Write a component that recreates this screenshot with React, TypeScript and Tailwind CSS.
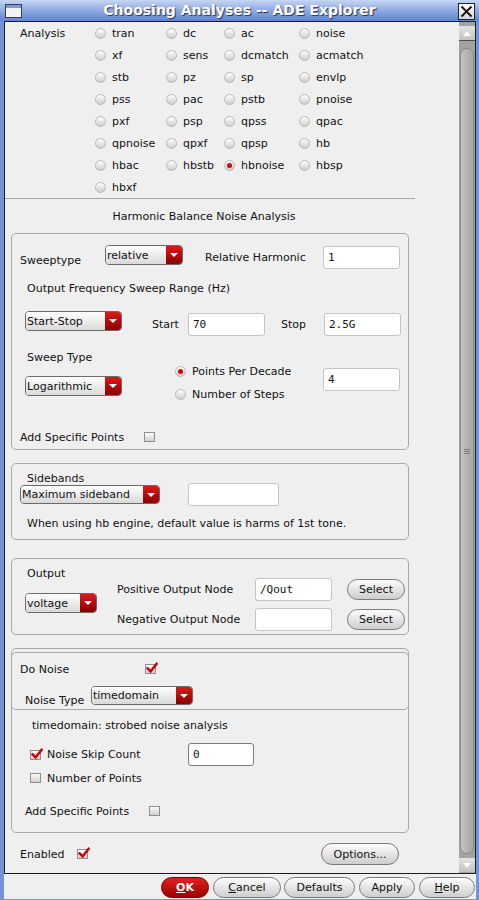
import React from 'react';

const ANALYSES: [string, boolean][] = [
  ['tran', false], ['dc', false], ['ac', false], ['noise', false],
  ['xf', false], ['sens', false], ['dcmatch', false], ['acmatch', false],
  ['stb', false], ['pz', false], ['sp', false], ['envlp', false],
  ['pss', false], ['pac', false], ['pstb', false], ['pnoise', false],
  ['pxf', false], ['psp', false], ['qpss', false], ['qpac', false],
  ['qpnoise', false], ['qpxf', false], ['qpsp', false], ['hb', false],
  ['hbac', false], ['hbstb', false], ['hbnoise', true], ['hbsp', false],
  ['hbxf', false],
];

function Radio({ on = false }: { on?: boolean }) {
  return (
    <span className="flex h-[11px] w-[11px] shrink-0 items-center justify-center rounded-full border border-[#b8b8b8] bg-gradient-to-b from-white to-[#cdcdcd]">
      {on && <span className="h-[5px] w-[5px] rounded-full bg-[#d60000]" />}
    </span>
  );
}

function Check({ on = false }: { on?: boolean }) {
  return (
    <span className="relative block h-[10px] w-[11px] shrink-0 border border-[#8e8e8e] bg-gradient-to-b from-[#fbfbfb] to-[#d0d0d0]">
      {on && (
        <svg className="absolute -top-[3px] left-0" width="12" height="12" viewBox="0 0 12 12">
          <path d="M1.6 6.4 L4.6 9.4 L10.6 1.8" stroke="#d00000" strokeWidth="2.4" fill="none" strokeLinecap="square" />
        </svg>
      )}
    </span>
  );
}

function Combo({ text, className }: { text: string; className: string }) {
  return (
    <div className={`flex shrink-0 overflow-hidden rounded-[4px] border border-[#6a6a6a] ${className}`}>
      <div className="flex flex-1 items-center bg-gradient-to-b from-white to-[#d9d9d9] pl-[1px] leading-[13px]">
        {text}
      </div>
      <div className="flex w-[16px] items-center justify-center bg-gradient-to-b from-[#dc1a1a] to-[#8c0000]">
        <span className="h-0 w-0 border-x-[4px] border-t-[4px] border-x-transparent border-t-white" />
      </div>
    </div>
  );
}

function Field({ value = '', className }: { value?: string; className: string }) {
  return (
    <div
      className={`flex shrink-0 items-center rounded-[3px] border bg-white pl-[4px] font-['DejaVu_Sans_Mono',monospace] text-[11px] ${className}`}
    >
      {value}
    </div>
  );
}

function Button({ children, className }: { children: React.ReactNode; className: string }) {
  return (
    <div
      className={`flex shrink-0 items-center justify-center rounded-full border border-[#7a7a7a] bg-gradient-to-b from-[#fdfdfd] to-[#cdcdcd] ${className}`}
    >
      {children}
    </div>
  );
}

function TitleBar() {
  return (
    <div className="relative flex h-[21px] shrink-0 items-center justify-center bg-gradient-to-b from-[#c6d6f3] via-[#8eaae2] to-[#6284cb]">
      <svg className="absolute left-[5px] top-[4px]" width="17" height="14" viewBox="0 0 17 14">
        <rect x="0.5" y="0.5" width="16" height="13" fill="#f2f2f2" stroke="#3a3a4a" />
        <rect x="1" y="1" width="15" height="3" fill="#7d9ad6" />
      </svg>
      <span className="font-['DejaVu_Sans',sans-serif] text-[14px] font-bold leading-[17px] text-white [text-shadow:1px_1px_1px_#223355]">
        Choosing Analyses -- ADE Explorer
      </span>
      <div className="absolute right-[4px] top-[3px] flex h-[17px] w-[17px] items-center justify-center border border-[#222] bg-gradient-to-b from-white to-[#d4d4d4]">
        <svg width="13" height="13" viewBox="0 0 13 13">
          <path d="M1.5 1.5 L11.5 11.5 M11.5 1.5 L1.5 11.5" stroke="#111" strokeWidth="1.8" />
        </svg>
      </div>
    </div>
  );
}

function Scrollbar() {
  return (
    <div className="flex w-[16px] flex-col bg-[#a3a3a3]">
      <div className="h-[4px]" />
      <div className="flex h-[15px] items-center justify-center border-b border-[#505050] bg-gradient-to-b from-[#e2e2e2] to-[#c2c2c2]">
        <span className="h-0 w-0 border-x-[4px] border-b-[5px] border-x-transparent border-b-white" />
      </div>
      <div className="h-[7px]" />
      <div className="mx-[1px] flex flex-1 items-center justify-center rounded-[7px] border border-[#8a8a8a] bg-gradient-to-r from-[#c4c4c4] via-[#b4b4b4] to-[#a8a8a8]">
        <div className="flex flex-col gap-[1px]">
          <span className="h-px w-[6px] bg-[#7a7a7a]" />
          <span className="h-px w-[6px] bg-[#7a7a7a]" />
          <span className="h-px w-[6px] bg-[#7a7a7a]" />
        </div>
      </div>
      <div className="h-[4px]" />
      <div className="flex h-[14px] items-center justify-center bg-gradient-to-b from-[#e2e2e2] to-[#c2c2c2]">
        <span className="h-0 w-0 border-x-[4px] border-t-[5px] border-x-transparent border-t-white" />
      </div>
      <div className="h-[1px]" />
    </div>
  );
}

function Content() {
  return (
    <div className="flex w-[454px] flex-col">
      {/* analysis radios */}
      <div className="flex h-[176px]">
        <div className="flex h-[22px] w-[90px] items-center pl-[15px]">Analysis</div>
        <div className="grid grid-cols-[71px_58px_75px_80px] auto-rows-[22px]">
          {ANALYSES.map(([name, on]) => (
            <div key={name} className="flex items-center">
              <Radio on={on} />
              <span className="ml-[6px]">{name}</span>
            </div>
          ))}
        </div>
      </div>
      <div className="h-px w-[410px] bg-[#a6a6a6]" />
      <div className="flex h-[34px] w-[398px] items-center justify-center">Harmonic Balance Noise Analysis</div>

      {/* sweep box */}
      <div className="ml-[6px] flex h-[217px] w-[398px] flex-col rounded-[5px] border border-[#a8a8a8]">
        <div className="mt-[11px] flex h-[24px] items-start">
          <span className="mt-[9px] w-[93px] pl-[8px]">Sweeptype</span>
          <Combo text="relative" className="h-[20px] w-[78px]" />
          <span className="ml-[22px] mt-[6px] w-[118px]">Relative Harmonic</span>
          <Field value="1" className="mt-[1px] h-[23px] w-[77px] border-[#c4c4c4]" />
        </div>
        <div className="mt-[13px] pl-[15px]">Output Frequency Sweep Range (Hz)</div>
        <div className="mt-[15px] flex h-[26px] items-start pl-[13px]">
          <Combo text="Start-Stop" className="mt-[1px] h-[20px] w-[97px]" />
          <span className="ml-[30px] mt-[8px] w-[36px]">Start</span>
          <Field value="70" className="mt-[3px] h-[23px] w-[77px] border-[#c4c4c4]" />
          <span className="ml-[16px] mt-[8px] w-[43px]">Stop</span>
          <Field value="2.5G" className="mt-[3px] h-[23px] w-[77px] border-[#c4c4c4]" />
        </div>
        <div className="mt-[15px] flex h-[55px] items-start">
          <div className="flex w-[110px] flex-col pl-[13px]">
            <span className="pl-[2px]">Sweep Type</span>
            <Combo text="Logarithmic" className="mt-[12px] h-[20px] w-[97px]" />
          </div>
          <div className="ml-[53px] flex w-[148px] flex-col pt-[9px]">
            <div className="flex h-[23px] items-center">
              <Radio on />
              <span className="ml-[6px]">Points Per Decade</span>
            </div>
            <div className="flex h-[23px] items-center">
              <Radio />
              <span className="ml-[6px]">Number of Steps</span>
            </div>
          </div>
          <Field value="4" className="mt-[17px] h-[23px] w-[77px] border-[#c4c4c4]" />
        </div>
        <div className="mt-[24px] flex h-[14px] items-center pl-[8px]">
          <span className="w-[124px]">Add Specific Points</span>
          <Check />
        </div>
      </div>

      {/* sidebands box */}
      <div className="ml-[6px] mt-[13px] flex h-[77px] w-[398px] flex-col rounded-[5px] border border-[#a8a8a8]">
        <div className="mt-[8px] pl-[15px]">Sidebands</div>
        <div className="-mt-[2px] flex h-[23px] items-center pl-[8px]">
          <Combo text="Maximum sideband" className="h-[19px] w-[140px]" />
          <Field className="ml-[28px] h-[23px] w-[91px] border-[#c4c4c4]" />
        </div>
        <div className="mt-[11px] pl-[15px]">When using hb engine, default value is harms of 1st tone.</div>
      </div>

      {/* output box */}
      <div className="ml-[6px] mt-[18px] flex h-[77px] w-[398px] rounded-[5px] border border-[#a8a8a8]">
        <div className="flex w-[105px] flex-col pl-[13px]">
          <span className="mt-[8px] pl-[2px]">Output</span>
          <Combo text="voltage" className="mt-[13px] h-[20px] w-[72px]" />
        </div>
        <div className="flex flex-col pt-[19px]">
          <div className="flex h-[23px] items-center">
            <span className="w-[138px]">Positive Output Node</span>
            <Field value="/Qout" className="h-[23px] w-[77px] border-[#c4c4c4]" />
            <Button className="ml-[15px] h-[21px] w-[58px]">Select</Button>
          </div>
          <div className="mt-[7px] flex h-[23px] items-center">
            <span className="w-[138px]">Negative Output Node</span>
            <Field className="h-[23px] w-[77px] border-[#c4c4c4]" />
            <Button className="ml-[15px] h-[21px] w-[58px]">Select</Button>
          </div>
        </div>
      </div>

      {/* noise box */}
      <div className="ml-[6px] mt-[13px] flex h-[185px] w-[398px] flex-col rounded-[5px] border border-[#a8a8a8]">
        <div className="-mx-px mt-[3px] flex h-[58px] flex-col rounded-[5px] border border-[#a8a8a8]">
          <div className="mt-[9px] flex h-[14px] items-center pl-[8px]">
            <span className="w-[125px]">Do Noise</span>
            <Check on />
          </div>
          <div className="mt-[10px] flex h-[19px] items-start">
            <span className="mt-[8px] w-[79px] pl-[13px]">Noise Type</span>
            <Combo text="timedomain" className="h-[19px] w-[102px]" />
          </div>
        </div>
        <div className="mt-[9px] pl-[20px]">timedomain: strobed noise analysis</div>
        <div className="mt-[11px] flex h-[23px] items-center pl-[18px]">
          <Check on />
          <span className="ml-[6px] w-[141px]">Noise Skip Count</span>
          <Field value="0" className="h-[23px] w-[66px] border-[#7c7c7c]" />
        </div>
        <div className="mt-[5px] flex h-[14px] items-center pl-[18px]">
          <Check />
          <span className="ml-[6px]">Number of Points</span>
        </div>
        <div className="mt-[19px] flex h-[14px] items-center pl-[13px]">
          <span className="w-[124px]">Add Specific Points</span>
          <Check />
        </div>
      </div>

      <div className="mt-[10px] flex h-[22px] items-center pl-[15px]">
        <span className="w-[57px]">Enabled</span>
        <Check on />
        <Button className="ml-[233px] h-[22px] w-[78px]">Options...</Button>
      </div>
    </div>
  );
}

export default function App() {
  return (
    <div className="flex h-[900px] w-[479px] flex-col overflow-hidden bg-[#7393d2] font-['DejaVu_Sans',sans-serif] text-[11px] leading-[13px] text-[#111]">
      <TitleBar />
      <div className="ml-[4px] mr-[3px] flex h-[878px] flex-col bg-[#efefef]">
        <div className="flex h-[853px] border border-[#1e1e1e]">
          <Content />
          <Scrollbar />
        </div>
        <div className="flex h-[24px] items-start pt-[3px]">
          <div className="ml-[157px] flex h-[21px] w-[48px] items-center justify-center rounded-full border border-[#6a0000] bg-gradient-to-b from-[#e42020] to-[#a00000] font-bold text-white">
            <span className="underline">O</span>K
          </div>
          <Button className="ml-[4px] h-[21px] w-[68px]">
            <span className="underline">C</span>ancel
          </Button>
          <Button className="ml-[3px] h-[21px] w-[71px]">Defaults</Button>
          <Button className="ml-[4px] h-[21px] w-[56px]">Apply</Button>
          <Button className="ml-[4px] h-[21px] w-[56px]">
            <span className="underline">H</span>elp
          </Button>
        </div>
      </div>
    </div>
  );
}
